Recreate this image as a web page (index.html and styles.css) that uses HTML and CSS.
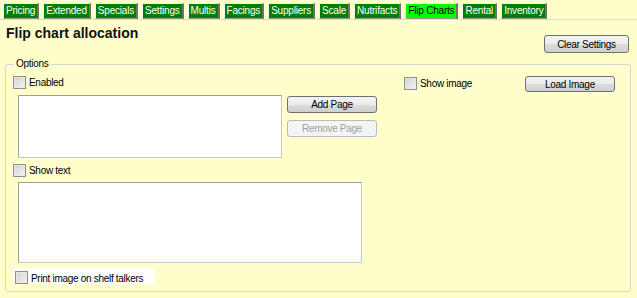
FILE: index.html
```html
<!DOCTYPE html>
<html lang="en">
<head>
    <meta charset="UTF-8">
    <title>Flip chart allocation</title>
    <link rel="stylesheet" href="styles.css">
</head>
<body>
    <!-- Tab strip -->
    <div class="tabs">
        <div class="tab">Pricing</div>
        <div class="tab">Extended</div>
        <div class="tab">Specials</div>
        <div class="tab">Settings</div>
        <div class="tab">Multis</div>
        <div class="tab">Facings</div>
        <div class="tab">Suppliers</div>
        <div class="tab">Scale</div>
        <div class="tab">Nutrifacts</div>
        <div class="tab active">Flip Charts</div>
        <div class="tab">Rental</div>
        <div class="tab">Inventory</div>
    </div>

    <div class="header">
        <h1>Flip chart allocation</h1>
        <button class="btn clear-btn">Clear Settings</button>
    </div>

    <fieldset class="options">
        <legend>Options</legend>
        <div class="options-grid">
            <div class="left-col">
                <label class="check"><input type="checkbox">Enabled</label>

                <div class="pages-row">
                    <div class="listbox"></div>
                    <div class="page-btns">
                        <button class="btn page-btn">Add Page</button>
                        <button class="btn page-btn" disabled>Remove Page</button>
                    </div>
                </div>

                <label class="check show-text"><input type="checkbox">Show text</label>
                <div class="textbox"></div>

                <label class="check print-row"><input type="checkbox">Print image on shelf talkers</label>
            </div>

            <div class="right-col">
                <label class="check show-image"><input type="checkbox">Show image</label>
                <button class="btn load-btn">Load Image</button>
            </div>
        </div>
    </fieldset>
</body>
</html>
```

FILE: styles.css
```css
/* Basic styling */
body {
    margin: 0;
    width: 637px;
    height: 298px;
    overflow: hidden;
    background-color: #ffffcc;
    font-family: "Liberation Sans", Arial, sans-serif;
    font-size: 10px;
    letter-spacing: -0.3px;
    color: #000;
}

/* Tab strip */
.tabs {
    display: flex;
    padding: 3px 0 0 3px;
    height: 16px;
    border-bottom: 1px solid #deddc4;
}
.tab {
    height: 14px;
    line-height: 14px;
    padding: 0 2px;
    margin-right: 4px;
    background-color: #008000;
    color: #fff;
    border-top: 1px solid #f4f4f4;
    border-left: 1px solid #f4f4f4;
    border-right: 2px solid #707070;
    border-bottom: 1px solid #9a9a9a;
    letter-spacing: -0.2px;
}
.tab.active {
    background-color: #00ff00;
    color: #000;
}

/* Header */
.header {
    display: flex;
    justify-content: space-between;
    align-items: flex-start;
    padding: 5px 8px 0 6px;
    height: 28px;
}
h1 {
    margin: 0;
    font-size: 14px;
    line-height: 17px;
    font-weight: bold;
    letter-spacing: 0;
    color: #111;
}

/* Buttons */
.btn {
    font-family: inherit;
    font-size: 10px;
    letter-spacing: -0.3px;
    color: #000;
    height: 17px;
    padding: 0;
    border: 1px solid #707070;
    border-radius: 3px;
    background: linear-gradient(#f3f3f3 0%, #ebebeb 50%, #dddddd 50%, #cfcfcf 100%);
}
.btn:disabled {
    color: #a0a0a0;
    border-color: #b5bcc2;
    background: #f4f4f4;
}
.clear-btn {
    width: 85px;
    height: 18px;
    margin-top: 10px;
}

/* Options group */
.options {
    margin: 5px 6px 0 5px;
    padding: 0 15px 8px 7px;
    border: 1px solid #d3d8d2;
    border-radius: 3px;
    box-sizing: border-box;
    height: 234px;
}
.options legend {
    padding: 0 2px;
    margin-left: 1px;
    line-height: 12px;
}
.options-grid {
    display: grid;
    grid-template-columns: 364px 1fr;
}

/* Checkboxes */
.check {
    display: flex;
    align-items: center;
    height: 13px;
    gap: 3px;
}
.check input {
    appearance: none;
    margin: 0;
    width: 13px;
    height: 13px;
    border: 1px solid #8f8f8f;
    background: linear-gradient(135deg, #d0d0d0, #f6f6f6);
    box-shadow: inset 0 0 0 1px #e8e8e8;
}

.left-col {
    display: flex;
    flex-direction: column;
    padding-top: 6px;
}
.pages-row {
    display: flex;
    margin-top: 6px;
}
.listbox {
    width: 263px;
    height: 61px;
    margin-left: 5px;
    background: #fff;
    border: 1px solid;
    border-color: #a0a0a0 #c8c8c8 #c8c8c8 #a0a0a0;
}
.page-btns {
    display: flex;
    flex-direction: column;
    gap: 7px;
    margin-left: 5px;
    padding-top: 1px;
}
.page-btn {
    width: 90px;
}
.show-text {
    margin-top: 6px;
}
.textbox {
    width: 342px;
    height: 79px;
    margin: 5px 0 0 5px;
    background: #fff;
    border: 1px solid;
    border-color: #a0a0a0 #c8c8c8 #c8c8c8 #a0a0a0;
}
.print-row {
    align-self: flex-start;
    height: 16px;
    margin-top: 5px;
    padding: 0 12px 0 2px;
    background: #fff;
    align-items: flex-end;
}

/* Right column */
.right-col {
    display: flex;
    justify-content: space-between;
    align-items: flex-start;
    padding: 6px 0 0 27px;
}
.show-image {
    margin-top: 1px;
}
.load-btn {
    width: 90px;
    height: 16px;
}
```
